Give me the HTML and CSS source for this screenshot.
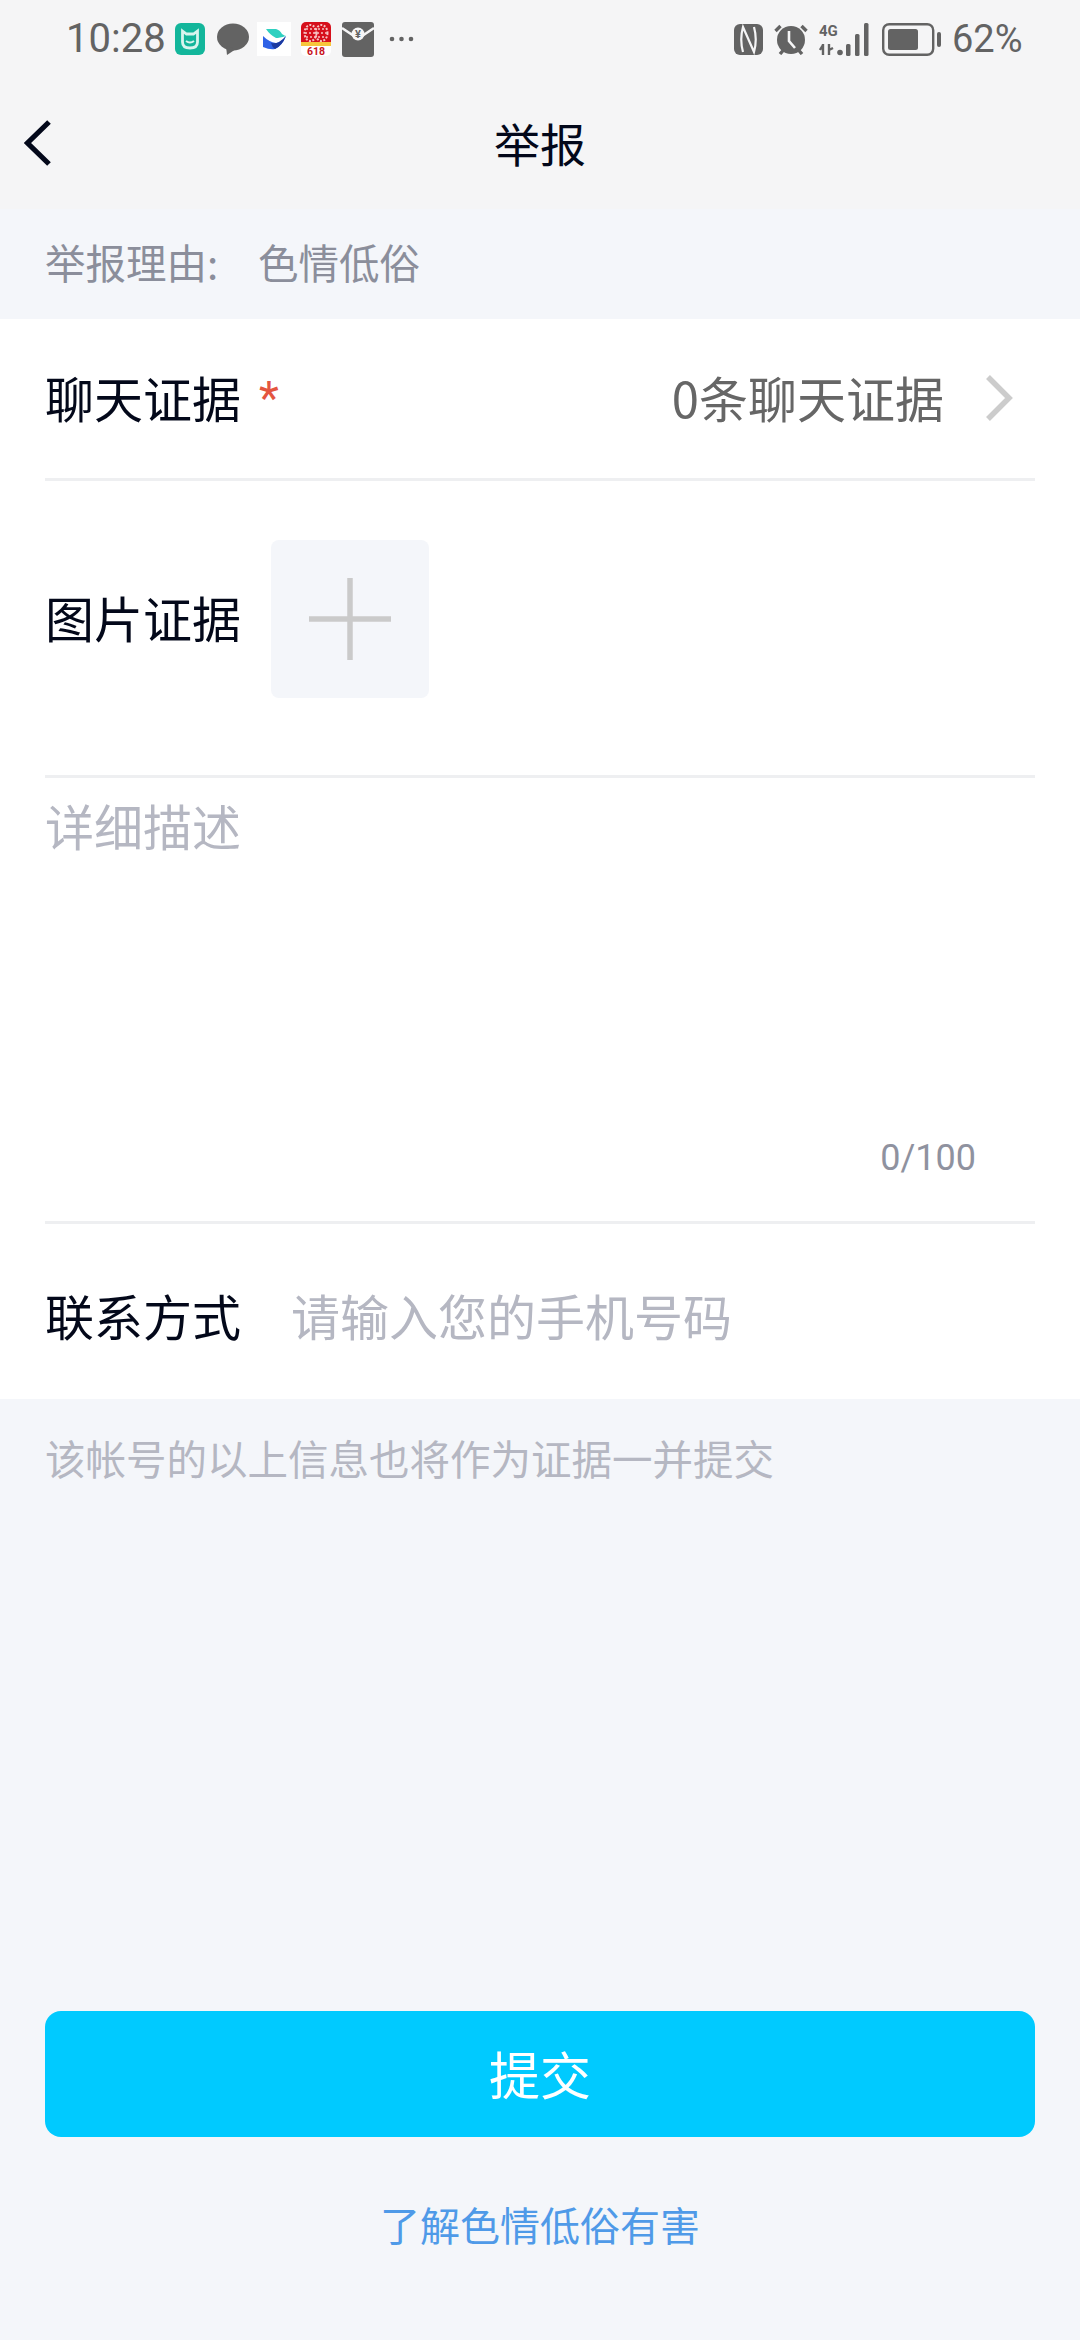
FILE: index.html
```html
<!DOCTYPE html>
<html lang="zh-CN">
<head>
<meta charset="utf-8">
<title>举报</title>
<link rel="stylesheet" href="styles.css">
</head>
<body>
<div class="page">
  <header class="top">
    <div class="status">
      <div class="status-left">
        <span class="time">10:28</span>
        <svg class="ic mi" viewBox="0 0 30 32"><rect width="30" height="32" rx="6" fill="#13b69b"/><path d="M7.500 8l4 3h7l4-3v11q0 6-7.500 6t-7.500-6z" fill="none" stroke="#d8f5ee" stroke-width="2.800"/><path d="M11 18q4 3 8 0" fill="none" stroke="#d8f5ee" stroke-width="2"/></svg>
        <svg class="ic bubble" viewBox="0 0 32 32"><ellipse cx="16" cy="14" rx="16" ry="13.500" fill="#636363"/><path d="M9 23l1 9 9-6z" fill="#636363"/></svg>
        <svg class="ic bird" viewBox="0 0 34 34"><rect width="34" height="34" fill="#fff"/><path d="M9 7h10q4 1 6 5 3 2 4 2-7 2-10 2-6-3-10-9z" fill="#2fd0c0"/><path d="M6 14q6 6 13 7 5 0 10-7-4 10-11 13-5 1-12-2z" fill="#2f62e6"/><path d="M14 21q7 2 15-7-4 10-11 13-3-2-4-6z" fill="#1c3aa0"/></svg>
        <svg class="ic s618" viewBox="0 0 30 37"><rect width="30" height="34" rx="5" fill="#fff"/><path d="M0 21V5a5 5 0 0 1 5-5h20a5 5 0 0 1 5 5v16z" fill="#d6101c"/><rect y="20" width="30" height="4" fill="#f7c63c"/><ellipse cx="9.500" cy="11" rx="6" ry="8" fill="none" stroke="#f6c4c4" stroke-width="2" stroke-dasharray="2 1.500"/><ellipse cx="20.500" cy="11" rx="6" ry="8" fill="none" stroke="#f6c4c4" stroke-width="2" stroke-dasharray="2 1.500"/><path d="M5 7h20M4 11h22M5 15h20" stroke="#f6c4c4" stroke-width="1.600" stroke-dasharray="2 2"/><text x="15" y="32.500" class="t618">618</text></svg>
        <svg class="ic env" viewBox="0 0 32 35"><rect width="32" height="35" rx="3" fill="#636363"/><path d="M0 6l12 8h8l12-8" fill="none" stroke="#f5f5f6" stroke-width="2.400"/><circle cx="16" cy="12" r="6.500" fill="#f5f5f6"/><text x="16" y="16" class="tyen">¥</text></svg>
        <svg class="ic dots" viewBox="0 0 25 6"><circle cx="3" cy="3" r="2.300" fill="#636363"/><circle cx="12.500" cy="3" r="2.300" fill="#636363"/><circle cx="22" cy="3" r="2.300" fill="#636363"/></svg>
      </div>
      <div class="status-right">
        <svg class="ic nfc" viewBox="0 0 29 31"><rect width="29" height="31" rx="6" fill="#636363"/><path d="M9 28q-3.500-12.500 0-25l11 25q3.500-12.500 0-25" fill="none" stroke="#f5f5f6" stroke-width="2.200"/></svg>
        <svg class="ic alarm" viewBox="0 0 34 32"><circle cx="17" cy="17" r="14" fill="#636363"/><path d="M1.500 8l5-5M32.500 8l-5-5M6 31l3.500-4M28 31l-3.500-4" stroke="#636363" stroke-width="3.400" fill="none"/><path d="M15 8v10l6 7" stroke="#f5f5f6" stroke-width="2.600" fill="none"/></svg>
        <svg class="ic signal" viewBox="0 0 50 33"><text x="0" y="13" class="t4g">4G</text><path d="M4 21v11M1 27l3-5M10 21v11M10 27l4-2" stroke="#636363" stroke-width="2.400" fill="none"/><circle cx="21" cy="29.500" r="2.800" fill="#636363"/><rect x="27" y="21" width="4.500" height="12" rx="1.500" fill="#636363"/><rect x="36" y="11" width="4.500" height="22" rx="1.500" fill="#636363"/><rect x="45" y="0" width="4.500" height="33" rx="1.500" fill="#636363"/></svg>
        <svg class="ic battery" viewBox="0 0 59 33"><rect x="1.200" y="1.200" width="50" height="30.600" rx="6" fill="none" stroke="#636363" stroke-width="2.400"/><rect x="6" y="6" width="30" height="21" rx="2.500" fill="#636363"/><rect x="55" y="9" width="4" height="15" rx="2" fill="#636363"/></svg>
        <span class="pct">62%</span>
      </div>
    </div>
    <nav class="nav">
      <svg class="back" viewBox="0 0 28 46"><path d="M25 2L3.500 23 25 44" fill="none" stroke="#03081a" stroke-width="5.200"/></svg>
      <h1 class="title">举报</h1>
    </nav>
  </header>

  <div class="reason"><span class="reason-label">举报理由:</span><span class="reason-value">色情低俗</span></div>

  <section class="form">
    <div class="row row-chat">
      <span class="label">聊天证据</span><span class="star">*</span>
      <span class="value">0条聊天证据</span>
      <svg class="chev" viewBox="0 0 28 48"><path d="M3 3l21 21L3 45" fill="none" stroke="#cccccc" stroke-width="5.500"/></svg>
    </div>
    <div class="row row-image">
      <span class="label">图片证据</span>
      <div class="add"><svg class="plus" viewBox="0 0 82 82"><path d="M0 41h82M41 0v82" stroke="#cacaca" stroke-width="5.500"/></svg></div>
    </div>
    <div class="row row-desc">
      <span class="placeholder">详细描述</span>
      <span class="count">0/100</span>
    </div>
    <div class="row row-contact">
      <span class="label">联系方式</span>
      <span class="placeholder">请输入您的手机号码</span>
    </div>
  </section>

  <p class="note">该帐号的以上信息也将作为证据一并提交</p>

  <footer class="foot">
    <button class="submit">提交</button>
    <a class="link">了解色情低俗有害</a>
  </footer>
</div>
</body>
</html>
```

FILE: styles.css
```css
* { box-sizing: border-box; }
html, body { margin: 0; padding: 0; }
body { font-family: "Noto Sans CJK SC", "Noto Sans", sans-serif; color: #03081a; }
.page { width: 1080px; height: 2340px; display: flex; flex-direction: column; background: #f4f6fa; overflow: hidden; }

.top { height: 209px; background: #f5f5f6; display: flex; flex-direction: column; flex: none; }
.status { height: 80px; padding: 20px 56px 0 66px; display: flex; justify-content: space-between; align-items: flex-start; color: #636363; }
.status-left, .status-right { display: flex; align-items: center; height: 38px; }
.time { font: 40px/38px Roboto, sans-serif; width: 109px; }
.pct { font: 38px/38px Roboto, sans-serif; margin-left: 11px; width: 72px; }
.ic { display: block; flex: none; }
.mi { width: 30px; height: 32px; }
.bubble { width: 32px; height: 32px; margin-left: 12px; }
.bird { width: 34px; height: 34px; margin-left: 8px; }
.s618 { width: 30px; height: 37px; margin: 3px 0 0 10px; }
.env { width: 32px; height: 35px; margin-left: 11px; }
.dots { width: 25px; height: 6px; margin-left: 15px; }
.nfc { width: 29px; height: 31px; }
.alarm { width: 34px; height: 32px; margin-left: 11px; }
.signal { width: 50px; height: 33px; margin-left: 11px; }
.battery { width: 59px; height: 33px; margin-left: 13px; }
.t618 { font: 700 10.500px Roboto, sans-serif; fill: #c8141e; text-anchor: middle; }
.tyen { font: 700 11px Roboto, sans-serif; fill: #636363; text-anchor: middle; }
.t4g { font: 700 15px "Liberation Sans Narrow", Roboto, sans-serif; fill: #636363; }

.nav { flex: 1; position: relative; display: flex; align-items: center; justify-content: center; padding-bottom: 5px; }
.back { position: absolute; left: 24px; top: 40px; width: 28px; height: 46px; }
.title { margin: 0; font-size: 46px; font-weight: 400; line-height: 60px; }

.reason { height: 110px; flex: none; padding: 0 45px 5px; display: flex; align-items: center; font-size: 40.500px; color: #8b8e9b; }
.reason-label { width: 213px; }

.form { background: #fff; flex: none; height: 1080px; padding: 0 45px; display: flex; flex-direction: column; }
.row { border-bottom: 3px solid #eeeff1; display: flex; align-items: center; font-size: 49px; }
.row:last-child { border-bottom: none; }
.row-chat { height: 162px; padding-bottom: 5px; }
.star { color: #e4553f; font: 46px/1 Roboto, sans-serif; margin-left: 18px; margin-top: 4px; }
.value { margin-left: auto; color: #666; margin-right: 41px; }
.chev { width: 28px; height: 48px; margin-right: 22px; margin-top: 4px; }
.row-image { height: 297px; padding-bottom: 18px; }
.row-image .label { margin-bottom: 6px; }
.add { width: 158px; height: 158px; margin-left: 30px; background: #f4f6fa; border-radius: 8px; display: flex; align-items: center; justify-content: center; }
.plus { width: 82px; height: 82px; }
.row-desc { height: 446px; display: block; position: relative; padding-top: 13px; }
.row-desc .placeholder { display: block; line-height: 68px; }
.count { position: absolute; right: 59px; bottom: 41px; font: 36px/44px Roboto, sans-serif; color: #8f929f; }
.row-contact { flex: 1; padding-top: 5px; }
.placeholder { color: #b5b7c2; }
.row-contact .placeholder { margin-left: 50px; }

.note { margin: 0; padding: 34px 45px 0; font-size: 40.500px; line-height: 50px; color: #b5b7c2; flex: none; }

.foot { margin-top: auto; padding: 0 45px 86px; display: flex; flex-direction: column; align-items: center; }
.submit { width: 100%; height: 126px; border: 0; border-radius: 16px; background: #00caff; color: #fff; font: 400 51px "Noto Sans CJK SC", sans-serif; padding: 0 0 3px; }
.link { margin-top: 57px; font-size: 40px; line-height: 60px; color: #4f9ae8; }
```
